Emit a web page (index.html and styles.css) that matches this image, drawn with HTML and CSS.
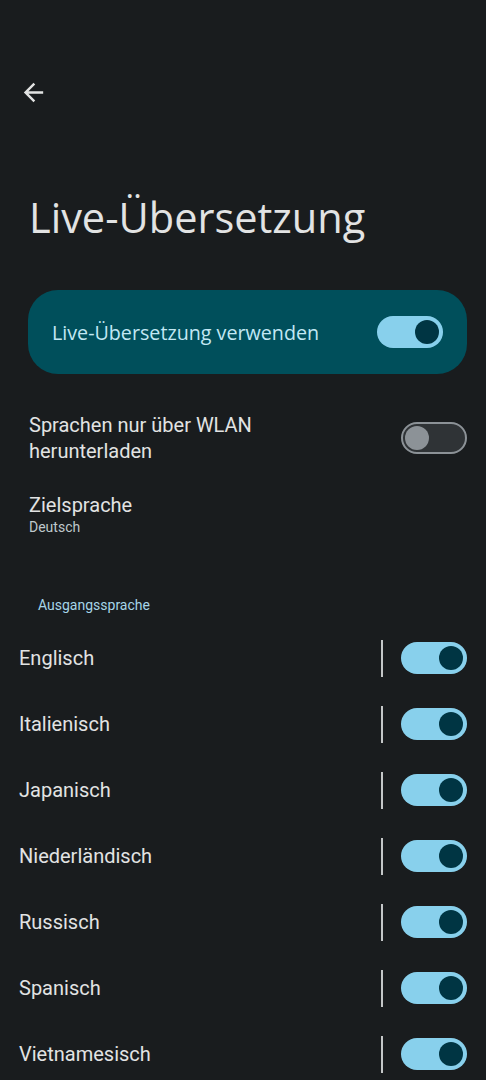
FILE: index.html
```html
<!DOCTYPE html>
<html lang="de">

<head>
    <meta charset="UTF-8">
    <meta name="viewport" content="width=device-width, initial-scale=1.0">
    <title>Live-Übersetzung</title>
    <link rel="stylesheet" href="styles.css">
</head>

<body>
    <div class="header">
        <button class="back" aria-label="Zurück">
            <svg width="29" height="29" viewBox="0 0 24 24">
                <path d="M20 11H7.83l5.59-5.59L12 4l-8 8 8 8 1.41-1.41L7.83 13H20v-2z" fill="#e2e3e3"/>
            </svg>
        </button>
    </div>

    <h1 class="title">Live-Übersetzung</h1>

    <div class="main-card">
        <span class="main-label">Live-Übersetzung verwenden</span>
        <span class="switch on"><span class="thumb"></span></span>
    </div>

    <div class="setting wlan">
        <span class="setting-label">Sprachen nur über WLAN<br>herunterladen</span>
        <span class="switch off"><span class="thumb"></span></span>
    </div>

    <div class="setting target">
        <span class="setting-label">Zielsprache</span>
        <span class="summary">Deutsch</span>
    </div>

    <div class="category">Ausgangssprache</div>

    <div class="languages">
        <div class="lang-row">
            <span class="lang-name">Englisch</span>
            <span class="divider"></span>
            <span class="switch on"><span class="thumb"></span></span>
        </div>
        <div class="lang-row">
            <span class="lang-name">Italienisch</span>
            <span class="divider"></span>
            <span class="switch on"><span class="thumb"></span></span>
        </div>
        <div class="lang-row">
            <span class="lang-name">Japanisch</span>
            <span class="divider"></span>
            <span class="switch on"><span class="thumb"></span></span>
        </div>
        <div class="lang-row">
            <span class="lang-name">Niederländisch</span>
            <span class="divider"></span>
            <span class="switch on"><span class="thumb"></span></span>
        </div>
        <div class="lang-row">
            <span class="lang-name">Russisch</span>
            <span class="divider"></span>
            <span class="switch on"><span class="thumb"></span></span>
        </div>
        <div class="lang-row">
            <span class="lang-name">Spanisch</span>
            <span class="divider"></span>
            <span class="switch on"><span class="thumb"></span></span>
        </div>
        <div class="lang-row">
            <span class="lang-name">Vietnamesisch</span>
            <span class="divider"></span>
            <span class="switch on"><span class="thumb"></span></span>
        </div>
    </div>
</body>

</html>
```

FILE: styles.css
```css
body {
    font-family: Roboto, "Liberation Sans", sans-serif;
    margin: 0;
    background-color: #191c1e;
    color: #e2e3e3;
    height: 1080px;
    overflow: hidden;
}

.header {
    padding: 68px 0 0 9px;
}

.back {
    width: 48px;
    height: 48px;
    display: flex;
    align-items: center;
    justify-content: center;
    background: none;
    border: none;
    padding: 0;
}

.title {
    margin: 76px 0 0 29px;
    font-family: "Open Sans", Roboto, sans-serif;
    font-size: 41.5px;
    line-height: 50px;
    font-weight: 400;
    color: #e2e3e3;
}

.main-card {
    margin: 48px 19px 0 28px;
    height: 84px;
    box-sizing: border-box;
    padding: 0 24px;
    border-radius: 30px;
    background-color: #004f5b;
    display: flex;
    align-items: center;
    justify-content: space-between;
}

.main-label {
    font-family: "Open Sans", Roboto, sans-serif;
    font-size: 19.7px;
    color: #c2e8f4;
}

.switch {
    width: 66px;
    height: 32px;
    box-sizing: border-box;
    border-radius: 16px;
    display: flex;
    align-items: center;
    flex-shrink: 0;
}

.switch .thumb {
    width: 24px;
    height: 24px;
    border-radius: 50%;
}

.switch.on {
    background-color: #88d0ec;
    justify-content: flex-end;
    padding-right: 4px;
}

.switch.on .thumb {
    background-color: #003543;
}

.switch.off {
    background-color: #2f3336;
    border: 2px solid #8c9297;
    padding-left: 2px;
}

.switch.off .thumb {
    background-color: #8c9297;
}

.setting {
    padding: 0 19px 0 29px;
}

.setting-label {
    font-size: 20px;
    line-height: 26px;
}

.wlan {
    margin-top: 22px;
    padding-top: 16px;
    padding-bottom: 16px;
    display: flex;
    align-items: center;
    justify-content: space-between;
}

.target {
    padding-top: 12px;
    padding-bottom: 12px;
    display: flex;
    flex-direction: column;
}

.summary {
    font-size: 14px;
    line-height: 18px;
    color: #bfc8cc;
}

.category {
    margin: 48px 0 0 38px;
    font-size: 14px;
    line-height: 18px;
    color: #a6d5e8;
}

.languages {
    margin-top: 11px;
}

.lang-row {
    height: 66px;
    display: flex;
    align-items: center;
    padding: 0 19px;
}

.lang-name {
    flex: 1;
    font-size: 20px;
}

.divider {
    width: 2px;
    height: 37px;
    background-color: #c4c7c8;
    margin-right: 18px;
}
```
